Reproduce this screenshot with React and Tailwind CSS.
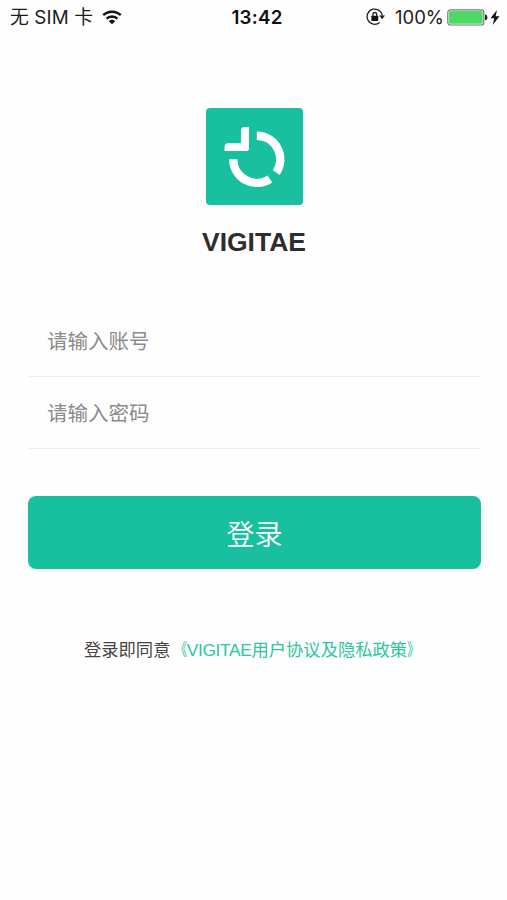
import React, { useState } from "react";

const cjk = "font-['Liberation_Sans','Noto_Sans_CJK_SC',sans-serif]";

function WifiIcon() {
  return (
    <svg viewBox="0 0 20 15" className="w-5 h-[15px]" fill="none" stroke="#111">
      <path d="M1.2 5.2a12.8 12.8 0 0 1 17.6 0" strokeWidth="2.4" />
      <path d="M4.5 8.7a8 8 0 0 1 11 0" strokeWidth="2.3" />
      <path d="M10 14.2 6.9 11.2a4.6 4.6 0 0 1 6.2 0z" fill="#111" stroke="none" />
    </svg>
  );
}

function RotationLockIcon() {
  return (
    <svg viewBox="0 0 20 18" className="w-5 h-[18px]" fill="none" stroke="#222">
      <path d="M16.3 9A7.6 7.6 0 1 0 13.7 14.4" strokeWidth="1.3" />
      <path d="M13.2 7.6h5.8l-2.9 3.6z" fill="#222" stroke="none" />
      <rect x="5.4" y="7.8" width="6.8" height="5.2" rx="0.5" fill="#111" stroke="none" />
      <path d="M6.9 8.3V6.4a1.9 1.9 0 0 1 3.8 0v1.9" strokeWidth="1.3" />
    </svg>
  );
}

function BatteryIcon() {
  return (
    <svg viewBox="0 0 41 17" className="w-[41px] h-[17px]">
      <rect x="0.8" y="0.8" width="36" height="15.2" rx="2.6" fill="#fff" stroke="#777" strokeWidth="1.2" />
      <rect x="2" y="2" width="33.6" height="12.8" rx="1.5" fill="#4cd964" />
      <path d="M38 5.5c3.2.3 3.2 5.5 0 5.8z" fill="#222" />
    </svg>
  );
}

function StatusBar() {
  return (
    <header className="grid grid-cols-3 h-[34px] leading-[34px] text-[#1c1c1c] font-[Inter,'Noto_Sans_CJK_SC',sans-serif]">
      <div className="flex h-[34px] items-center pl-[10px] whitespace-nowrap">
        <span className="pt-px text-[18.8px] tracking-[0.15px]">无 SIM 卡</span>
        <span className="ml-[9px]">
          <WifiIcon />
        </span>
      </div>
      <div className="pt-px pl-[7px] text-center text-[18.8px] tracking-[0.2px] font-semibold text-[#111]">
        13:42
      </div>
      <div className="flex h-[34px] items-center justify-end pr-[7px]">
        <RotationLockIcon />
        <span className="ml-[9px] text-[18.5px]">100%</span>
        <span className="ml-[3px]">
          <BatteryIcon />
        </span>
        <svg viewBox="0 0 10 15" className="ml-[2px] w-[10px] h-[15px]" fill="#111">
          <path d="M7 0 .5 8.3h3.8L2.7 15 9.5 6.2H5.6z" />
        </svg>
      </div>
    </header>
  );
}

function Logo() {
  return (
    <svg viewBox="33 25 290 290" className="w-[97px] h-[97px] rounded-[4px] bg-[#19c09f]" fill="none" stroke="#fff">
      <path d="M185 108A70.5 70.5 0 0 1 243 218" strokeWidth="25" />
      <path d="M114.5 178A70.5 70.5 0 0 0 224 237" strokeWidth="25" />
      <path
        d="M139 88Q141 83 149 83H160V145Q160 152 153 152H90V142Q90 132 98 132H139z"
        fill="#fff"
        strokeWidth="3"
        strokeLinejoin="round"
      />
    </svg>
  );
}

function Field({ type, placeholder, value, onChange }) {
  return (
    <label className="flex h-[72px] items-center border-b border-[#efefef] pt-[3px] pl-[19px]">
      <input
        type={type}
        value={value}
        placeholder={placeholder}
        onChange={(e) => onChange(e.target.value)}
        className="w-full bg-transparent text-[20.5px] text-[#444] outline-none placeholder:text-[#8b8b8b]"
      />
    </label>
  );
}

export default function App() {
  const [account, setAccount] = useState("");
  const [password, setPassword] = useState("");

  return (
    <div className={`min-h-[900px] bg-[#fefefe] ${cjk}`}>
      <StatusBar />
      <main className="flex flex-col items-center pr-[26px] pl-[28px] pt-[74px]">
        <Logo />
        <h1 className="mt-[21px] h-8 pr-px text-[26.5px] leading-8 font-bold text-[#2d2d2f]">VIGITAE</h1>

        <form className="mt-[47px] w-full" onSubmit={(e) => e.preventDefault()}>
          <Field type="text" placeholder="请输入账号" value={account} onChange={setAccount} />
          <Field type="password" placeholder="请输入密码" value={password} onChange={setPassword} />
          <button
            type="submit"
            className="mt-[47px] flex h-[73px] w-full items-center justify-center rounded-[8px] bg-[#19c09f] pt-[6px] text-[28px] font-[350] text-white"
          >
            登录
          </button>
        </form>

        <p className="mt-[68px] w-full pl-[56px] text-[17.3px] leading-[26px] whitespace-nowrap text-[#444]">
          登录即同意
          <a href="#agreement" className="text-[#2bc5a0]">
            <span className="-mr-px inline-block origin-right scale-x-[0.72]">《</span>
            <span className="tracking-[-0.3px]">VIGITAE</span>
            <span>用户协议及隐私政策</span>
            <span className="inline-block origin-left scale-x-[0.72]">》</span>
          </a>
        </p>
      </main>
    </div>
  );
}
